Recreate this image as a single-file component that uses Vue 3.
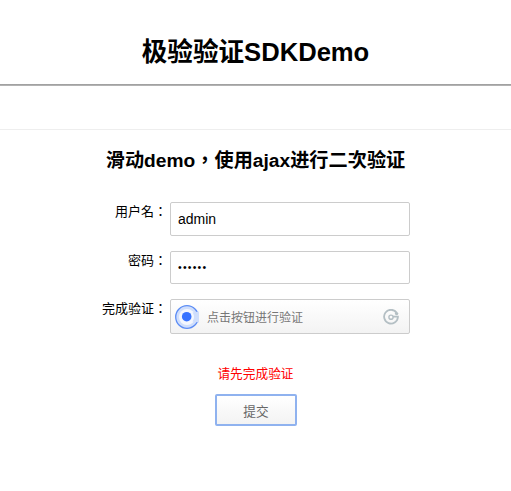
<script setup>
import { ref } from "vue";

const username = ref("admin");
const password = ref("123456");
</script>

<template>
    <div class="page">
        <h1 class="title">极验验证SDKDemo</h1>
        <hr class="rule-dark" />
        <hr class="rule-light" />
        <h2 class="subtitle">滑动demo，使用ajax进行二次验证</h2>
        <form class="login" @submit.prevent>
            <div class="row">
                <label class="label">用户名：</label>
                <input class="field" type="text" v-model="username" />
            </div>
            <div class="row">
                <label class="label">密码：</label>
                <input class="field secret" type="password" v-model="password" />
            </div>
            <div class="row">
                <label class="label">完成验证：</label>
                <div class="captcha">
                    <svg class="radar" width="24" height="24" viewBox="0 0 24 24">
                        <circle cx="12" cy="12" r="11.3" fill="#cfdefc" stroke="#5d8df5" stroke-width="1.3" />
                        <circle cx="12" cy="12" r="8" fill="#f4f7fe" />
                        <path d="M17.5 7.5 L24 6.5 L24 17.5 L17.5 16.5 A8 8 0 0 0 17.5 7.5 Z" fill="#cfdefc" />
                        <circle cx="11.7" cy="11.7" r="4.8" fill="#3873ff" />
                    </svg>
                    <span class="captcha-text">点击按钮进行验证</span>
                    <svg class="logo" width="16" height="16" viewBox="0 0 16 16" fill="none">
                        <path d="M13.6 3.6 A6.9 6.9 0 1 0 14.9 8.2 L14.9 7.6 H10" stroke="#b4bfc4" stroke-width="1.8" />
                        <circle cx="8" cy="8.2" r="2.1" stroke="#b4bfc4" stroke-width="1.4" />
                        <circle cx="13.6" cy="4.6" r="1.7" fill="#b4bfc4" />
                    </svg>
                </div>
            </div>
            <p class="notice">请先完成验证</p>
            <button class="submit" type="submit">提交</button>
        </form>
    </div>
</template>

<style scoped>
.page {
    width: 511px;
    height: 491px;
    overflow: hidden;
    font-family: "Liberation Sans", Arial, "Noto Sans CJK SC", sans-serif;
    color: #000;
}

.title {
    margin: 0;
    padding-top: 35px;
    height: 49px;
    box-sizing: content-box;
    font-size: 25.6px;
    line-height: 34px;
    font-weight: bold;
    text-align: center;
}

.rule-dark,
.rule-light {
    margin: 0;
    border: 0;
    height: 1px;
}

.rule-dark {
    height: 2px;
    background: linear-gradient(#999, #bbb);
}

.rule-light {
    margin-top: 43px;
    background: #eee;
}

.subtitle {
    margin: 18px 0 0;
    font-family: "Liberation Sans", Arial, "Noto Sans CJK TC", sans-serif;
    font-size: 19.2px;
    line-height: 26px;
    font-weight: bold;
    text-align: center;
}

.login {
    display: flex;
    flex-direction: column;
    align-items: center;
    margin-top: 28px;
}

.row {
    display: flex;
    width: 311px;
    margin-bottom: 15px;
}

.label {
    width: 67px;
    flex: none;
    margin-right: 3px;
    padding-top: 1px;
    box-sizing: border-box;
    height: 20px;
    font-family: "Liberation Sans", Arial, "Noto Sans CJK TC", sans-serif;
    line-height: 18px;
    font-size: 13px;
    text-align: right;
    white-space: nowrap;
}

.field {
    width: 240px;
    height: 33.5px;
    box-sizing: border-box;
    padding: 0 7px;
    border: 1px solid #ccc;
    border-radius: 2px;
    outline: none;
    background: #fff;
    font-family: inherit;
    font-size: 14px;
    color: #000;
}

.secret {
    font-size: 10.5px;
    letter-spacing: 1.2px;
}

.captcha {
    display: flex;
    align-items: center;
    width: 240px;
    height: 35px;
    box-sizing: border-box;
    padding: 0 10px 0 4px;
    border: 1px solid #ccc;
    border-radius: 2px;
    background: linear-gradient(#fff, #f3f3f3);
}

.radar {
    flex: none;
}

.captcha-text {
    flex: 1;
    margin-left: 8px;
    font-size: 12px;
    color: #777;
}

.logo {
    flex: none;
}

.notice {
    margin: 16px 0 0;
    font-size: 12.7px;
    line-height: 18px;
    color: #f00;
}

.submit {
    width: 82px;
    height: 32px;
    margin: 11px 0 0 1px;
    padding: 0;
    border: 2px solid #8fb2ef;
    border-radius: 2px;
    background: linear-gradient(#fff, #f3f3f3);
    font-family: inherit;
    font-size: 12.7px;
    color: #666;
}
</style>
